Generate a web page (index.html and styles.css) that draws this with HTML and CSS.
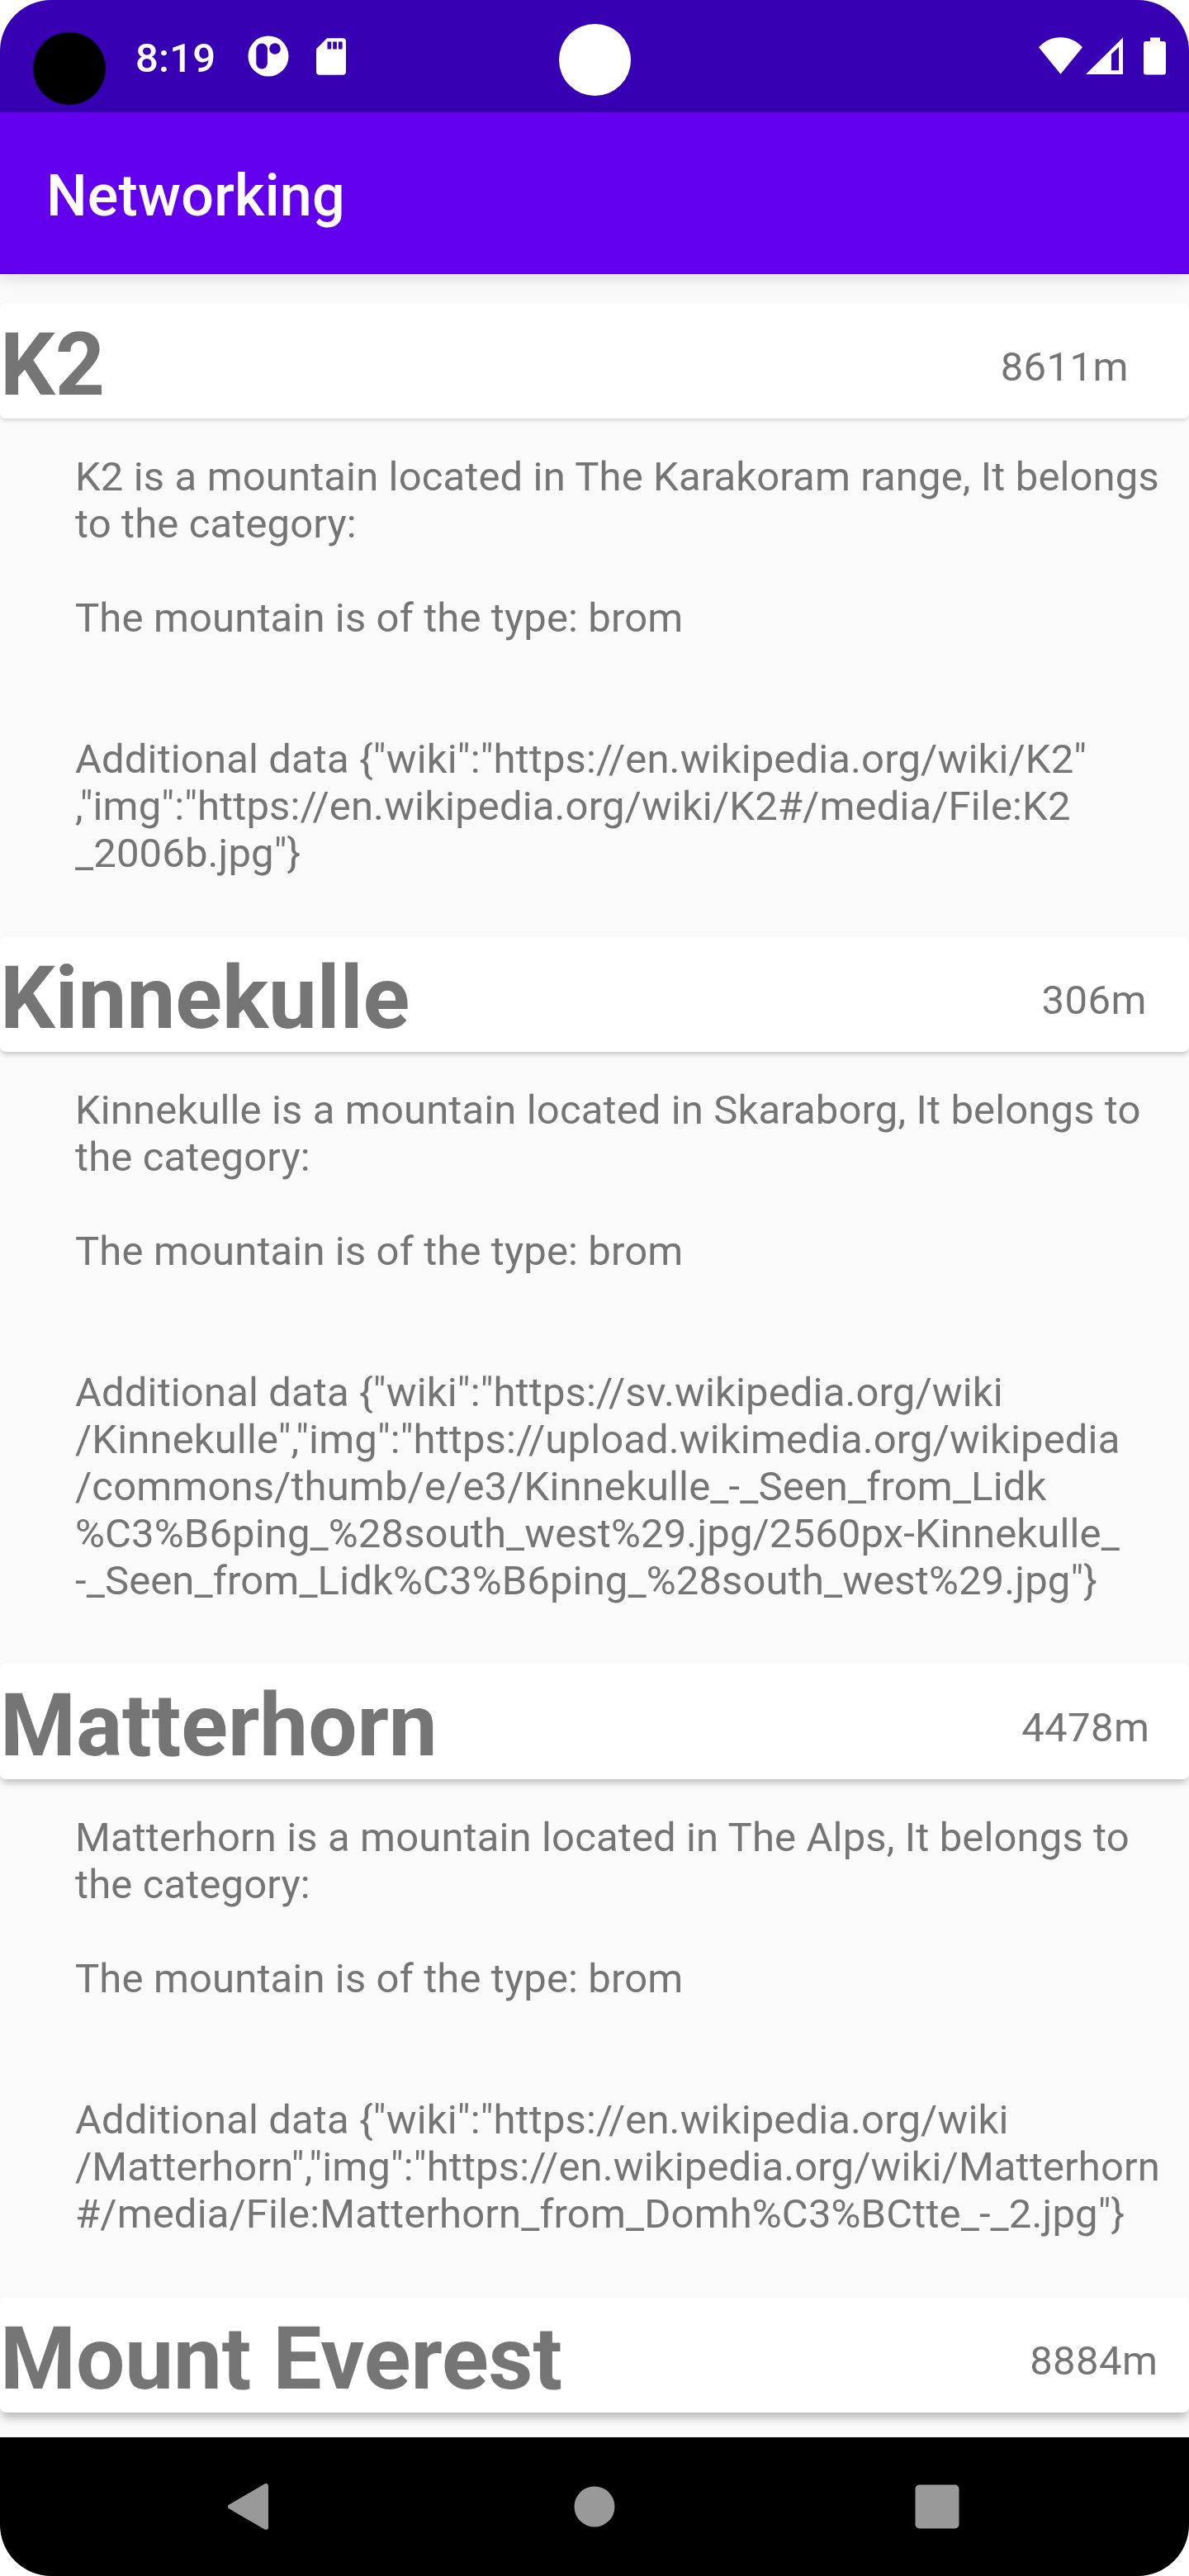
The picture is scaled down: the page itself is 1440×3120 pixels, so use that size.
FILE: index.html
```html
<!DOCTYPE html>
<html lang="en">
<head>
<meta charset="utf-8">
<title>Networking</title>
<link rel="stylesheet" href="styles.css">
</head>
<body>
<div class="screen">
  <header class="status">
    <span class="lens"></span>
    <span class="clock">8:19</span>
    <svg class="app-icon" width="50" height="50" viewBox="0 0 50 50"><circle cx="25" cy="25" r="24.5" fill="#fff"/><rect x="10.3" y="9.5" width="13.6" height="31" rx="6.8" fill="#3700b3"/><circle cx="33" cy="16" r="6.8" fill="#3700b3"/></svg>
    <svg class="sd-icon" width="36" height="45" viewBox="0 0 36 45"><path fill="#fff" fill-rule="evenodd" d="M13 .3H32a4 4 0 0 1 4 4V40.700a4 4 0 0 1-4 4H4a4 4 0 0 1-4-4V13.300ZM13.500 4.500v9h4.700v-9ZM20.200 4.500v9h4.700v-9ZM26.900 4.500v9h4.700v-9Z"/></svg>
    <span class="camera"></span>
    <svg class="wifi-icon" width="53" height="45" viewBox="0 0 53 45"><path fill="#fff" d="M0 12.300C7 4.500 16 .2 26.500 .2S46 4.500 53 12.300L26.500 44.700Z"/></svg>
    <svg class="signal-icon" width="45" height="45" viewBox="0 0 45 45"><path fill="#fff" fill-rule="evenodd" d="M45 .5V45H0ZM40 12L31 20.500V40.300H40Z"/></svg>
    <svg class="battery-icon" width="27" height="46" viewBox="0 0 27 46"><path fill="#fff" d="M8 .5H20V5H24a3 3 0 0 1 3 3V42.500a3 3 0 0 1-3 3H3a3 3 0 0 1-3-3V8a3 3 0 0 1 3-3H8Z"/></svg>
  </header>
  <div class="toolbar"><h1>Networking</h1></div>
  <main class="list">
    <article class="item depth-1">
      <div class="card"><h2>K2</h2><span class="height">8611m</span></div>
      <p class="details">K2 is a mountain located in The Karakoram range, It belongs
to the category:

The mountain is of the type: brom


Additional data {"wiki":"https://en.wikipedia.org/wiki/K2"
,"img":"https://en.wikipedia.org/wiki/K2#/media/File:K2
_2006b.jpg"}</p>
    </article>
    <article class="item depth-2">
      <div class="card"><h2>Kinnekulle</h2><span class="height">306m</span></div>
      <p class="details">Kinnekulle is a mountain located in Skaraborg, It belongs to
the category:

The mountain is of the type: brom


Additional data {"wiki":"https://sv.wikipedia.org/wiki
/Kinnekulle","img":"https://upload.wikimedia.org/wikipedia
/commons/thumb/e/e3/Kinnekulle_-_Seen_from_Lidk
%C3%B6ping_%28south_west%29.jpg/2560px-Kinnekulle_
-_Seen_from_Lidk%C3%B6ping_%28south_west%29.jpg"}</p>
    </article>
    <article class="item depth-3">
      <div class="card"><h2>Matterhorn</h2><span class="height">4478m</span></div>
      <p class="details">Matterhorn is a mountain located in The Alps, It belongs to
the category:

The mountain is of the type: brom


Additional data {"wiki":"https://en.wikipedia.org/wiki
/Matterhorn","img":"https://en.wikipedia.org/wiki/Matterhorn
#/media/File:Matterhorn_from_Domh%C3%BCtte_-_2.jpg"}</p>
    </article>
    <article class="item depth-4">
      <div class="card"><h2>Mount Everest</h2><span class="height">8884m</span></div>
    </article>
  </main>
  <nav class="navbar">
    <svg width="60" height="60" viewBox="0 0 60 60"><path fill="#999" stroke="#999" stroke-width="6" stroke-linejoin="round" d="M4 30L47 5V55Z"/></svg>
    <svg width="60" height="60" viewBox="0 0 60 60"><circle cx="30" cy="30" r="24.500" fill="#999"/></svg>
    <svg width="60" height="60" viewBox="0 0 60 60"><rect x="3.500" y="3.500" width="53" height="53" rx="5" fill="#999"/></svg>
  </nav>
</div>
</body>
</html>
```
FILE: styles.css
```css
* { box-sizing: border-box; }
body { margin: 0; background: #fff; font-family: Roboto, sans-serif; color: #757575; }
h1, h2, p { margin: 0; }
svg { display: block; flex: none; }

.screen {
  width: 1440px;
  height: 3120px;
  display: flex;
  flex-direction: column;
  overflow: hidden;
  border-radius: 62px;
  background: #fafafa;
}

.status {
  position: relative;
  flex: none;
  display: flex;
  align-items: flex-start;
  height: 136px;
  padding-left: 40px;
  padding-right: 28px;
  background: #3700b3;
}
.lens { width: 88px; height: 88px; margin-top: 39px; border-radius: 50%; background: #000; }
.clock { width: 97px; margin: 42px 0 0 36px; font-size: 49px; line-height: 57px; font-weight: 500; letter-spacing: 0.2px; color: #fff; white-space: nowrap; }
.app-icon { margin: 43px 0 0 39px; }
.sd-icon { margin: 46px 0 0 33px; }
.camera { position: absolute; left: 677px; top: 29px; width: 87px; height: 87px; border-radius: 50%; background: #fff; }
.wifi-icon { margin: 45px 0 0 auto; }
.signal-icon { margin: 45px 0 0 4px; }
.battery-icon { margin: 45px 0 0 25px; }

.toolbar {
  position: relative;
  z-index: 1;
  flex: none;
  display: flex;
  align-items: center;
  height: 196px;
  padding-top: 6px;
  padding-left: 56px;
  background: #6200ee;
  box-shadow: 0 5px 18px rgba(0, 0, 0, 0.12);
}
.toolbar h1 { font-size: 70px; line-height: 82px; font-weight: 500; letter-spacing: 0.2px; color: #fff; }

.list { flex: 1; min-height: 0; padding-top: 35px; overflow: hidden; }
.card {
  display: flex;
  justify-content: space-between;
  height: 140px;
  border-radius: 7px;
  background: #fff;
}
.card h2 { padding-top: 14px; font-size: 105px; line-height: 123px; font-weight: 700; white-space: nowrap; }
.height { padding-top: 49px; font-size: 49px; line-height: 57px; letter-spacing: 0.45px; }
.details { padding: 42px 0 72px 91px; font-size: 49px; line-height: 57px; letter-spacing: 0.13px; white-space: pre; }

.depth-1 .card { padding-right: 73px; box-shadow: 0 3px 5px -1px rgba(0, 0, 0, 0.17); }
.depth-2 .card { padding-right: 51px; box-shadow: 0 4px 6px -1px rgba(0, 0, 0, 0.21); }
.depth-3 .card { padding-right: 47.5px; box-shadow: 0 6px 9px -2px rgba(0, 0, 0, 0.25); }
.depth-4 .card { padding-right: 37.5px; box-shadow: 0 8px 11px -2px rgba(0, 0, 0, 0.27); }

.navbar {
  flex: none;
  display: flex;
  justify-content: center;
  align-items: center;
  gap: 355px;
  height: 168px;
  background: #000;
}
```
